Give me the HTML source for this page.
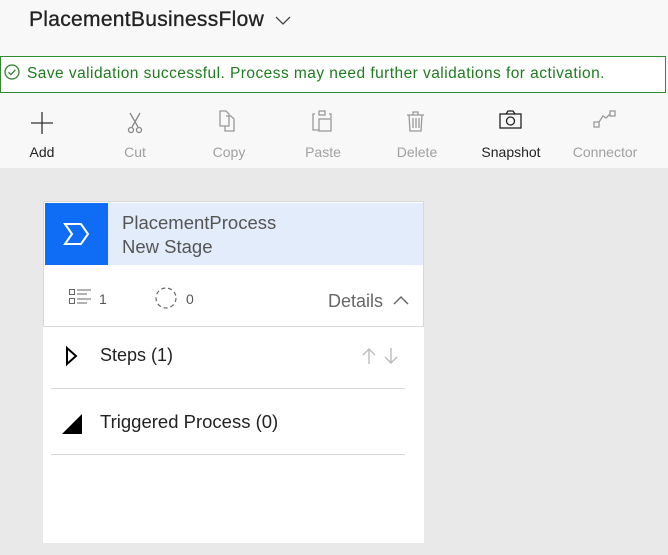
<!DOCTYPE html>
<html><head><style>
body{margin:0;width:668px;height:555px;background:#e9e9e9;font-family:"Liberation Sans",sans-serif;position:relative;overflow:hidden}
.top{position:absolute;left:0;top:0;width:668px;height:168px;background:#f8f8f8}
.t{position:absolute;white-space:nowrap}
.tb{font-size:14px;color:#a0a0a0;text-align:center;width:80px}
</style></head><body>
<div class="top"></div>
<div class="t" style="left:29px;top:8px;font-size:21px;letter-spacing:0.3px;color:#222;-webkit-text-stroke:0.3px #222">PlacementBusinessFlow</div>
<svg style="position:absolute;left:274px;top:14px" width="18" height="12"><path d="M2 3l7 7 7-7" fill="none" stroke="#444" stroke-width="1.3"/></svg>
<div style="position:absolute;left:0;top:56px;width:664px;height:35px;border:1px solid #2e8b2e;background:#fff"></div>
<svg style="position:absolute;left:4px;top:64px" width="16" height="16"><circle cx="8" cy="8" r="7" fill="none" stroke="#2a7a2a" stroke-width="1.2"/><path d="M4.5 8.3l2.3 2.3 4.6-4.8" fill="none" stroke="#2a7a2a" stroke-width="1.2"/></svg>
<div class="t" style="left:27px;top:65px;font-size:15.5px;letter-spacing:0.45px;color:#1e7b1e">Save validation successful. Process may need further validations for activation.</div>
<svg style="position:absolute;left:0;top:105px" width="668" height="30" fill="none" stroke-width="1.3">
<path d="M42 7v22M31 18h22" stroke="#333"/>
<g stroke="#888"><path d="M130 8l8 14M140 8l-8 14"/><circle cx="131" cy="25" r="2.5"/><circle cx="139" cy="25" r="2.5"/></g>
<g stroke="#999"><path d="M220 6h6l3 3v12h-9z"/><path d="M226 11h5l3 3v12h-9v-5"/></g>
<g stroke="#999"><path d="M315 9h-2v16h6M329 9h2v4"/><rect x="319" y="6" width="6" height="4"/><rect x="319" y="14" width="12" height="12"/></g>
<g stroke="#999"><path d="M407 10h17M413 10V7h5v3M409 10l1 16h11l1-16M413 13v10M416 13v10M419 13v10"/></g>
<g stroke="#222"><rect x="500" y="9" width="21" height="14"/><circle cx="510.5" cy="16" r="4"/><path d="M506 9l2-3h5l2 3"/></g>
<g stroke="#999"><rect x="594" y="17" width="5" height="5"/><rect x="610" y="6" width="5" height="5"/><path d="M599 17l4-6 3 2 4-4"/></g>
</svg>
<div class="t tb" style="left:2px;top:144px;color:#222">Add</div>
<div class="t tb" style="left:95px;top:144px">Cut</div>
<div class="t tb" style="left:189px;top:144px">Copy</div>
<div class="t tb" style="left:283px;top:144px">Paste</div>
<div class="t tb" style="left:377px;top:144px">Delete</div>
<div class="t tb" style="left:471px;top:144px;color:#222">Snapshot</div>
<div class="t tb" style="left:565px;top:144px">Connector</div>

<div style="position:absolute;left:43px;top:201px;width:381px;height:342px;background:#fff"></div>
<div style="position:absolute;left:43px;top:201px;width:379px;height:124px;border:1px solid #d8d8d8"></div>
<div style="position:absolute;left:45px;top:203px;width:378px;height:62px;background:#e3ecfa"></div>
<div style="position:absolute;left:45px;top:203px;width:63px;height:62px;background:#0f6cf5"></div>
<svg style="position:absolute;left:62px;top:221px" width="30" height="26"><path d="M3 3h16l7 10-7 10H3l7-10z" fill="none" stroke="#fff" stroke-width="2"/></svg>
<div class="t" style="left:122px;top:212px;font-size:18.5px;color:#555">PlacementProcess</div>
<div class="t" style="left:122px;top:236px;font-size:18.5px;color:#555">New Stage</div>
<svg style="position:absolute;left:68px;top:288px" width="24" height="18" fill="none" stroke="#666" stroke-width="1"><rect x="1.5" y="1.5" width="5" height="5"/><rect x="1.5" y="10.5" width="5" height="5"/><path d="M9 2h14M9 6h10M9 11h14M9 15h10"/></svg>
<div class="t" style="left:99px;top:291px;font-size:14px;color:#555">1</div>
<svg style="position:absolute;left:154px;top:286px" width="24" height="24"><circle cx="12" cy="12" r="10" fill="none" stroke="#666" stroke-width="1.2" stroke-dasharray="4 3"/></svg>
<div class="t" style="left:186px;top:291px;font-size:14px;color:#555">0</div>
<div class="t" style="left:328px;top:291px;font-size:18px;color:#666">Details</div>
<svg style="position:absolute;left:392px;top:294px" width="18" height="12"><path d="M2 10l7-7 7 7" fill="none" stroke="#666" stroke-width="1.4"/></svg>
<svg style="position:absolute;left:64px;top:345px" width="16" height="22"><path d="M3 3l9 8-9 8z" fill="none" stroke="#000" stroke-width="2"/></svg>
<div class="t" style="left:100px;top:345px;font-size:18px;color:#222">Steps (1)</div>
<svg style="position:absolute;left:360px;top:346px" width="42" height="20" fill="none" stroke="#bbb" stroke-width="1.4"><path d="M9 18V3M3 9l6-6 6 6M31 2v15M25 11l6 6 6-6"/></svg>
<div style="position:absolute;left:51px;top:388px;width:354px;height:1px;background:#d8d8d8"></div>
<svg style="position:absolute;left:60px;top:412px" width="24" height="24"><path d="M2 22L22 2v20z" fill="#000"/></svg>
<div class="t" style="left:100px;top:411px;font-size:18.5px;color:#222">Triggered Process (0)</div>
<div style="position:absolute;left:51px;top:454px;width:354px;height:1px;background:#d8d8d8"></div>
</body></html>
